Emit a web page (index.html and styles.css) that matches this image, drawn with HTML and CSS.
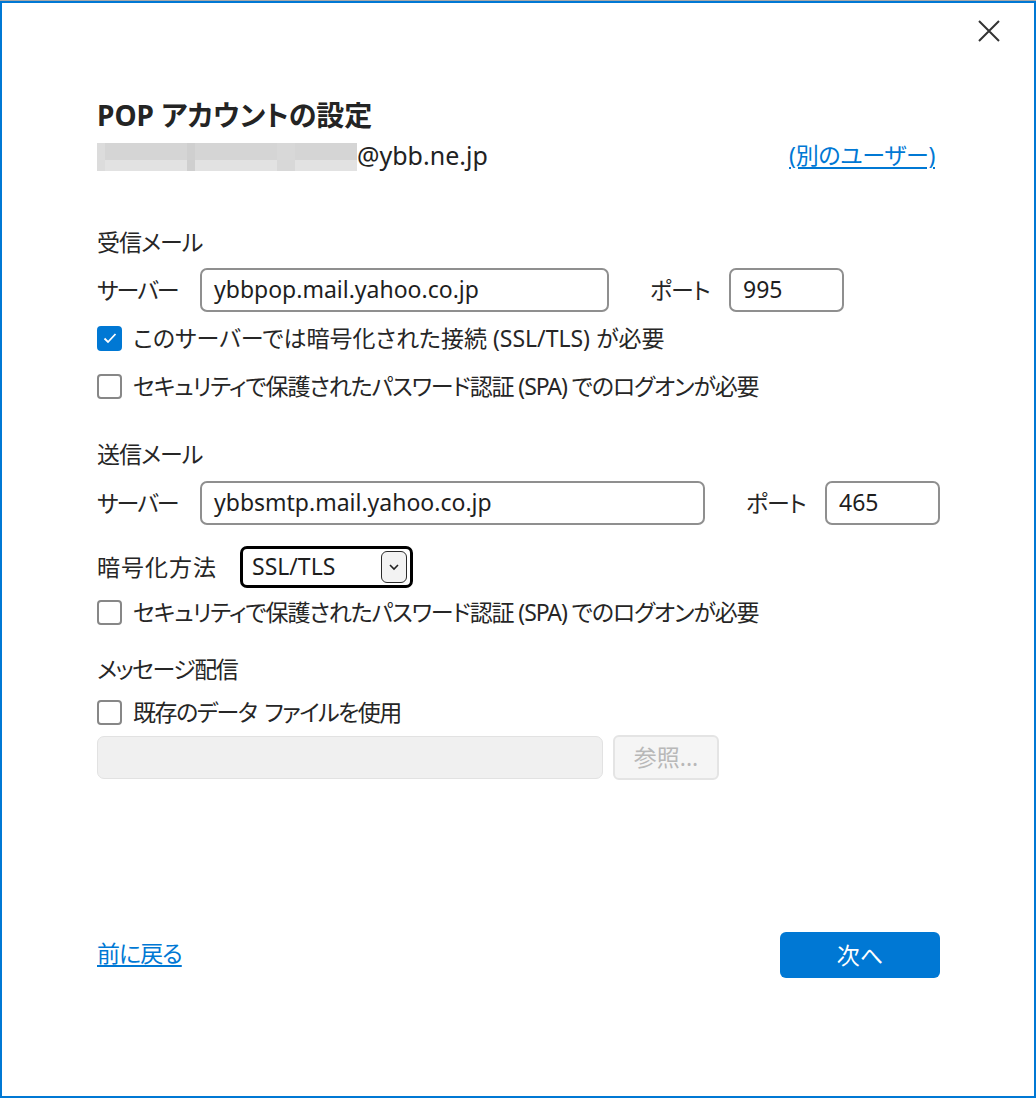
FILE: index.html
```html
<!DOCTYPE html>
<html lang="ja">
<head>
<meta charset="utf-8">
<title>POP アカウントの設定</title>
<link rel="stylesheet" href="styles.css">
</head>
<body>
<div class="strip"></div>
<div class="window">
  <div class="header">
    <button class="close" aria-label="閉じる">
      <svg width="22" height="22" viewBox="0 0 22 22"><path d="M1 1 L21 21 M21 1 L1 21" stroke="#333" stroke-width="2" fill="none"/></svg>
    </button>
  </div>
  <div class="content">
    <h1 class="title">POP アカウントの設定</h1>
    <div class="account-row">
      <div class="account"><span class="redacted"></span><span class="domain">@ybb.ne.jp</span></div>
      <a class="link other" href="#">(別のユーザー)</a>
    </div>

    <div class="section-label incoming">受信メール</div>
    <div class="server-row first">
      <span class="label">サーバー</span>
      <div class="field server-in">ybbpop.mail.yahoo.co.jp</div>
      <span class="port-label">ポート</span>
      <div class="field port">995</div>
    </div>
    <div class="check-row c1">
      <span class="box checked"><svg width="14" height="12" viewBox="0 0 14 12"><path d="M1.5 6.5 L5 10 L12.5 2" stroke="#fff" stroke-width="1.8" fill="none"/></svg></span>
      <span class="check-text">このサーバーでは暗号化された接続 (SSL/TLS) が必要</span>
    </div>
    <div class="check-row c2">
      <span class="box"></span>
      <span class="check-text spa">セキュリティで保護されたパスワード認証 (SPA) でのログオンが必要</span>
    </div>

    <div class="section-label outgoing">送信メール</div>
    <div class="server-row second">
      <span class="label">サーバー</span>
      <div class="field server-out">ybbsmtp.mail.yahoo.co.jp</div>
      <span class="port-label">ポート</span>
      <div class="field port">465</div>
    </div>
    <div class="enc-row">
      <span class="enc-label">暗号化方法</span>
      <div class="select">
        <span class="select-value">SSL/TLS</span>
        <span class="select-btn"><svg width="12" height="8" viewBox="0 0 12 8"><path d="M2 2 L6 6 L10 2" stroke="#222" stroke-width="1.6" fill="none"/></svg></span>
      </div>
    </div>
    <div class="check-row c3">
      <span class="box"></span>
      <span class="check-text spa">セキュリティで保護されたパスワード認証 (SPA) でのログオンが必要</span>
    </div>

    <div class="section-label delivery">メッセージ配信</div>
    <div class="check-row c4">
      <span class="box"></span>
      <span class="check-text existing">既存のデータ<span class="gap"> </span>ファイルを使用</span>
    </div>
    <div class="file-row">
      <div class="file-field"></div>
      <div class="browse">参照...</div>
    </div>

    <div class="footer">
      <a class="link back" href="#">前に戻る</a>
      <button class="next">次へ</button>
    </div>
  </div>
</div>
</body>
</html>
```
FILE: styles.css
```css
html, body {
  margin: 0;
  padding: 0;
  background: #ffffff;
}
body {
  width: 1036px;
  height: 1098px;
  overflow: hidden;
  font-family: "Noto Sans", "Noto Sans CJK JP", sans-serif;
  font-feature-settings: "palt";
  color: #262626;
  font-size: 23px;
}
.strip {
  height: 1px;
  background: #a8a8a8;
}
.window {
  box-sizing: border-box;
  height: 1097px;
  border: 2px solid #0078d4;
  background: #fff;
}
.header {
  height: 95px;
  display: flex;
  justify-content: flex-end;
  align-items: flex-start;
}
.close {
  width: 40px;
  height: 40px;
  margin-top: 8px;
  margin-right: 25px;
  border: none;
  background: transparent;
  padding: 0;
  display: flex;
  align-items: center;
  justify-content: center;
}
.content {
  margin-left: 95px;
  width: 842px;
  display: flex;
  flex-direction: column;
}
.title {
  margin: 0;
  font-size: 28px;
  line-height: 35px;
  height: 36px;
  font-weight: 700;
  color: #242424;
}
.account-row {
  margin-top: 9px;
  height: 28px;
  display: flex;
  justify-content: space-between;
  align-items: center;
}
.account {
  display: flex;
  align-items: center;
}
.redacted {
  display: inline-block;
  width: 260px;
  height: 28px;
  background:
    linear-gradient(to right, #dcdcdc 0 8px, transparent 8px 90px, #cfcfcf 90px 98px, transparent 98px 180px, #d8d8d8 180px 198px, transparent 198px),
    linear-gradient(to bottom, #d5d5d5 0 17px, #e2e2e2 17px);
}
.domain {
  font-size: 25px;
  line-height: 24px;
  padding-bottom: 4px;
  color: #222;
}
.link {
  color: #0078d4;
  text-decoration: underline;
  text-underline-offset: 3px;
  line-height: 24px;
  padding-bottom: 4px;
}
.other {
  margin-right: 4px;
  letter-spacing: -0.3px;
}
.section-label {
  height: 30px;
  line-height: 29px;
  letter-spacing: -1px;
}
.incoming { margin-top: 57px; }
.outgoing { margin-top: 39px; }
.delivery { margin-top: 28px; letter-spacing: -1.5px; }

.server-row {
  display: flex;
  align-items: center;
  height: 44px;
}
.server-row.first { margin-top: 10px; }
.server-row.second { margin-top: 11px; }
.label, .port-label, .enc-label, .check-text {
  padding-bottom: 3px;
}
.label {
  width: 103px;
  flex: none;
  letter-spacing: -2px;
}
.field {
  box-sizing: border-box;
  height: 44px;
  border: 2px solid #8f8f8f;
  border-radius: 7px;
  padding-left: 12px;
  padding-bottom: 3px;
  display: flex;
  align-items: center;
  color: #1e1e1e;
  flex: none;
}
.server-in { width: 409px; }
.server-out { width: 505px; }
.port { width: 115px; }
.port-label {
  width: 79px;
  margin-left: 41px;
  flex: none;
  letter-spacing: -1px;
}
.check-row {
  display: flex;
  align-items: center;
  height: 30px;
}
.c1 { margin-top: 11px; }
.c2 { margin-top: 18px; }
.c3 { margin-top: 9px; }
.c4 { margin-top: 12px; }
.spa { letter-spacing: -1.1px; }
.existing { letter-spacing: -1.5px; }
.gap { letter-spacing: 2px; }
.box {
  box-sizing: border-box;
  width: 25px;
  height: 25px;
  border: 2px solid #878787;
  border-radius: 4px;
  margin-right: 11px;
  flex: none;
  display: flex;
  align-items: center;
  justify-content: center;
}
.box.checked {
  background: #0078d4;
  border-color: #0078d4;
}
.enc-row {
  margin-top: 21px;
  height: 42px;
  display: flex;
  align-items: center;
}
.enc-label {
  width: 143px;
  flex: none;
  letter-spacing: 1px;
}
.select {
  box-sizing: border-box;
  width: 173px;
  height: 42px;
  border: 3px solid #000;
  border-radius: 7px;
  display: flex;
  align-items: center;
  justify-content: space-between;
  padding-left: 9px;
  padding-right: 3px;
}
.select-value {
  color: #1e1e1e;
  padding-bottom: 3px;
}
.select-btn {
  box-sizing: border-box;
  width: 26px;
  height: 32px;
  background: #f3f3f3;
  border: 1.5px solid #2a2a2a;
  border-radius: 6px;
  display: flex;
  align-items: center;
  justify-content: center;
}
.file-row {
  margin-top: 8px;
  display: flex;
  align-items: center;
  height: 44px;
}
.file-field {
  box-sizing: border-box;
  width: 506px;
  height: 43px;
  background: #f0f0f0;
  border: 1.5px solid #e2e2e2;
  border-radius: 7px;
}
.browse {
  box-sizing: border-box;
  margin-left: 10px;
  width: 106px;
  height: 45px;
  background: #f5f5f5;
  border: 2px solid #e4e4e4;
  border-radius: 6px;
  color: #b8b8b8;
  display: flex;
  align-items: center;
  justify-content: center;
  padding-bottom: 3px;
}
.footer {
  margin-top: 153px;
  height: 46px;
  display: flex;
  justify-content: space-between;
  align-items: center;
}
.back {
  letter-spacing: -1px;
}
.next {
  width: 160px;
  height: 46px;
  border: none;
  border-radius: 6px;
  background: #0078d4;
  color: #fff;
  font-family: inherit;
  font-feature-settings: "palt";
  font-size: 23px;
  padding: 0 0 3px 0;
  margin-right: -1px;
}
```
